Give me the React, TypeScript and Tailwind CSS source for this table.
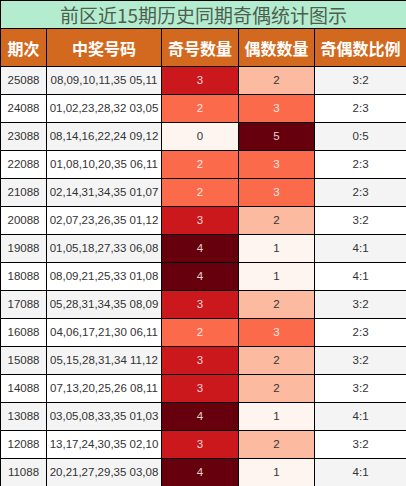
const rows = [
  ["25088", "08,09,10,11,35 05,11", 3, 2],
  ["24088", "01,02,23,28,32 03,05", 2, 3],
  ["23088", "08,14,16,22,24 09,12", 0, 5],
  ["22088", "01,08,10,20,35 06,11", 2, 3],
  ["21088", "02,14,31,34,35 01,07", 2, 3],
  ["20088", "02,07,23,26,35 01,12", 3, 2],
  ["19088", "01,05,18,27,33 06,08", 4, 1],
  ["18088", "08,09,21,25,33 01,08", 4, 1],
  ["17088", "05,28,31,34,35 08,09", 3, 2],
  ["16088", "04,06,17,21,30 06,11", 2, 3],
  ["15088", "05,15,28,31,34 11,12", 3, 2],
  ["14088", "07,13,20,25,26 08,11", 3, 2],
  ["13088", "03,05,08,33,35 01,03", 4, 1],
  ["12088", "13,17,24,30,35 02,10", 3, 2],
  ["11088", "20,21,27,29,35 03,08", 4, 1],
] as const;

// odd-count colours and even-count colours from the Reds scale
const oddCls: Record<number, string> = {
  0: "bg-[#fff5f0] text-[#333]",
  2: "bg-[#fb6a4a] text-[#fde8e0]",
  3: "bg-[#cb181d] text-[#f6d6d6]",
  4: "bg-[#67000d] text-[#e8d0d0]",
};
const evenCls: Record<number, string> = {
  1: "bg-[#fff5f0] text-[#333]",
  2: "bg-[#fcbba1] text-[#333]",
  3: "bg-[#fb6a4a] text-[#fde8e0]",
  5: "bg-[#67000d] text-[#e8d0d0]",
};

const headers = ["期次", "中奖号码", "奇号数量", "偶数数量", "奇偶数比例"];

export default function App() {
  return (
    <div className="w-[406px] h-[486px] bg-white">
      <table
        className="w-[406px] table-fixed border-collapse text-center"
        style={{ fontFamily: '"Liberation Sans", "Noto Sans CJK SC", sans-serif' }}
      >
        <colgroup>
          <col className="w-[46px]" />
          <col className="w-[115px]" />
          <col className="w-[77px]" />
          <col className="w-[76px]" />
          <col className="w-[92px]" />
        </colgroup>
        <tbody>
          <tr>
            <td
              colSpan={5}
              className="h-[28px] p-0 border border-black bg-[#b4ecd0] text-[#4d5f4f] text-[19px] leading-none font-['Noto_Sans_CJK_SC',sans-serif]"
            >
              前区近15期历史同期奇偶统计图示
            </td>
          </tr>
          <tr>
            {headers.map((h) => (
              <td
                key={h}
                className="h-[38px] p-0 border border-black bg-[#d2691e] text-white text-[16px] font-bold leading-none font-['Noto_Sans_CJK_SC',sans-serif]"
              >
                {h}
              </td>
            ))}
          </tr>
          {rows.map(([issue, nums, odd, even], i) => {
            const bg = i % 2 === 0 ? "bg-[#f4f4f4]" : "bg-white";
            return (
              <tr key={issue} className="text-[11.5px] text-[#333]">
                <td className={`h-[28px] p-0 border border-black ${bg}`}>{issue}</td>
                <td className={`p-0 border border-black whitespace-nowrap ${bg}`}>{nums}</td>
                <td className={`p-0 border border-black ${oddCls[odd]}`}>{odd}</td>
                <td className={`p-0 border border-black ${evenCls[even]}`}>{even}</td>
                <td className={`p-0 border border-black ${bg}`}>
                  {odd}:{even}
                </td>
              </tr>
            );
          })}
        </tbody>
      </table>
    </div>
  );
}
